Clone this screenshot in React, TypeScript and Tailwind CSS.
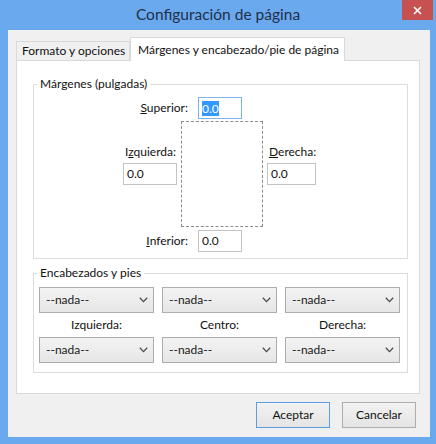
import React from "react";

function Chevron() {
  return (
    <svg width="9" height="6" viewBox="0 0 9 6" className="shrink-0">
      <polyline points="0.8,0.8 4.5,4.6 8.2,0.8" fill="none" stroke="#4a4a4a" strokeWidth="1.3" />
    </svg>
  );
}

function Select() {
  return (
    <div className="h-[26px] border border-[#acacac] bg-gradient-to-b from-[#f3f3f3] to-[#e6e6e6] flex items-center justify-between pl-[6px] pr-[5px] text-[#1a1a1a]">
      <span>--nada--</span>
      <Chevron />
    </div>
  );
}

function Input({ w, children, focused }: { w: string; children: React.ReactNode; focused?: boolean }) {
  return (
    <div
      className={
        "h-[22px] bg-white flex items-center pl-[3px] border " +
        (focused ? "border-[#7eb4ea] " : "border-[#c3c3c3] ") +
        w
      }
    >
      {children}
    </div>
  );
}

export default function App() {
  return (
    <div className="w-[436px] h-[444px] bg-[#6ba9ee] relative flex flex-col font-['Lato','Noto_Sans',sans-serif] text-[12px] text-[#111]">
      {/* Title bar */}
      <div className="h-[30px] flex items-center justify-center text-[15.5px] text-[#1f3049]">
        Configuración de página
      </div>
      <div className="absolute left-[402px] top-0 w-[31px] h-[20px] bg-[#c75050] flex items-center justify-center">
        <svg width="9" height="9" viewBox="0 0 9 9">
          <path d="M1 1 L8 8 M8 1 L1 8" stroke="#fff" strokeWidth="1.6" />
        </svg>
      </div>

      {/* Client area */}
      <div className="flex-1 ml-[8px] mr-[6px] mb-[7px] bg-[#f0f0f0] flex flex-col pl-[8px] pt-[7px]">
        {/* Tabs */}
        <div className="flex items-end h-[23px]">
          <div className="w-[114px] h-[19px] border border-b-0 border-[#d9d9d9] bg-[#f0f0f0] flex items-center pl-[5px] leading-none">
            Formato y opciones
          </div>
          <div className="w-[215px] h-[24px] -mb-px relative z-10 border border-b-0 border-[#d9d9d9] bg-white flex items-center pl-[7px] leading-none">
            Márgenes y encabezado/pie de página
          </div>
        </div>

        {/* Panel */}
        <div className="w-[404px] h-[334px] border border-[#d9d9d9] bg-white pl-[16px]">
          {/* Group 1 */}
          <div className="relative mt-[23px] w-[375px] h-[175px] border border-[#dcdcdc] flex flex-col">
            <span className="absolute left-[3px] -top-[9px] px-[3px] bg-white leading-[16px]">
              Márgenes (pulgadas)
            </span>
            <div className="mt-[12px] flex items-center h-[22px]">
              <span className="w-[154px] text-right">
                <span className="underline">S</span>uperior:
              </span>
              <div className="ml-[10px]">
                <Input w="w-[44px]" focused>
                  <span className="bg-[#3399ff] text-white leading-[15px]">0.0</span>
                </Input>
              </div>
            </div>
            <div className="mt-[2px] flex items-start">
              <div className="w-[147px] pl-[89px] pt-[23px] flex flex-col items-start">
                <span className="ml-[2px] leading-[16px]">
                  I<span className="underline">z</span>quierda:
                </span>
                <div className="mt-[3px]">
                  <Input w="w-[54px]">0.0</Input>
                </div>
              </div>
              <div className="w-[82px] h-[106px] border border-dashed border-[#8c8c8c]" />
              <div className="pl-[4px] pt-[23px] flex flex-col items-start">
                <span className="ml-[2px] leading-[16px]">
                  <span className="underline">D</span>erecha:
                </span>
                <div className="mt-[3px]">
                  <Input w="w-[49px]">0.0</Input>
                </div>
              </div>
            </div>
            <div className="mt-[3px] flex items-center h-[22px]">
              <span className="w-[154px] text-right">
                <span className="underline">I</span>nferior:
              </span>
              <div className="ml-[10px]">
                <Input w="w-[44px]">0.0</Input>
              </div>
            </div>
          </div>

          {/* Group 2 */}
          <div className="relative mt-[14px] w-[375px] h-[100px] border border-[#dcdcdc] pl-[5px]">
            <span className="absolute left-[3px] -top-[9px] px-[3px] bg-white leading-[16px]">
              Encabezados y pies
            </span>
            <div className="mt-[13px] grid grid-cols-[115px_115px_115px] gap-x-[8px]">
              <Select />
              <Select />
              <Select />
            </div>
            <div className="mt-[4px] grid grid-cols-[115px_115px_115px] gap-x-[8px] h-[16px] leading-[16px] text-center">
              <span>Izquierda:</span>
              <span>Centro:</span>
              <span>Derecha:</span>
            </div>
            <div className="mt-[4px] grid grid-cols-[115px_115px_115px] gap-x-[8px]">
              <Select />
              <Select />
              <Select />
            </div>
          </div>
        </div>

        {/* Buttons */}
        <div className="w-[404px] mt-[8px] pr-[4px] flex justify-end gap-[12px]">
          <button className="w-[74px] h-[26px] border border-[#5a9fe0] bg-gradient-to-b from-[#f2f2f2] to-[#e4e4e4] text-[12px]">
            Aceptar
          </button>
          <button className="w-[74px] h-[26px] border border-[#adadad] bg-gradient-to-b from-[#f2f2f2] to-[#e4e4e4] text-[12px]">
            Cancelar
          </button>
        </div>
      </div>
    </div>
  );
}
